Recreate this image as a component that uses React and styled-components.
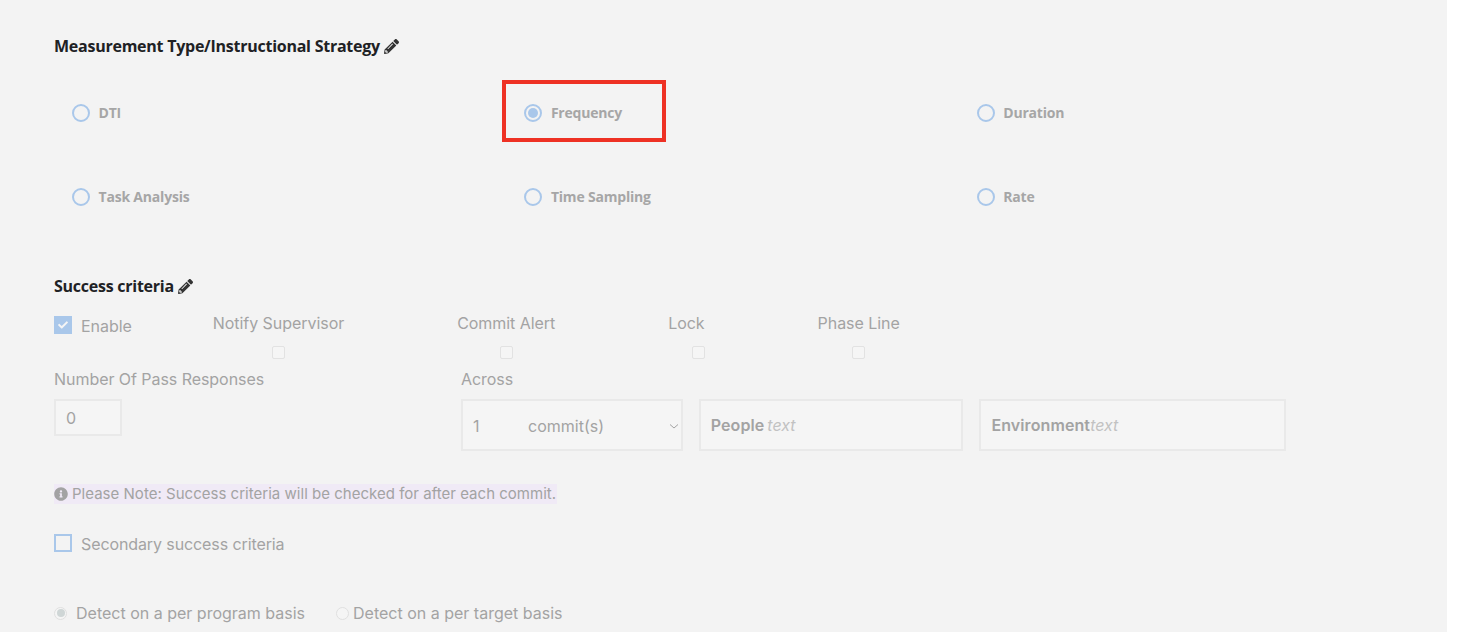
import React from "react";
import styled, { createGlobalStyle } from "styled-components";
import { FaPencilAlt, FaInfoCircle, FaCheck } from "react-icons/fa";

const Global = createGlobalStyle`
  html, body { margin: 0; padding: 0; background: #fff; overflow: hidden; }
  body { font-family: Inter, "Liberation Sans", sans-serif; }
`;

const Panel = styled.main`
  position: relative;
  width: 1447px;
  height: 632px;
  box-sizing: border-box;
  padding: 36px 0 0 54px;
  background: #f3f3f3;
  overflow: hidden;
`;

const Heading = styled.h2`
  display: flex;
  align-items: center;
  gap: 4px;
  height: 20px;
  margin: 0;
  font: 700 16px/20px "Open Sans", sans-serif;
  letter-spacing: -0.25px;
  color: #202124;
  svg { width: 15px; height: 15px; color: #333; }
`;

const RadioGrid = styled.div`
  display: grid;
  grid-template-columns: repeat(3, 452.4px);
  grid-auto-rows: 84px;
  margin: 15px 0 37px;
  padding-left: 18px;
`;

const RadioOption = styled.label`
  display: flex;
  align-items: center;
  gap: 8.5px;
  font: 700 14px/20px "Open Sans", sans-serif;
  letter-spacing: -0.2px;
  color: #a6a6a6;
`;

const RadioDot = styled.span`
  position: relative;
  box-sizing: border-box;
  width: 18px;
  height: 18px;
  border: 2px solid #a9c7ea;
  border-radius: 50%;
  &::after {
    content: "";
    display: ${(p) => (p.$on ? "block" : "none")};
    position: absolute;
    inset: 2px;
    border-radius: 50%;
    background: #a9c7ea;
  }
`;

const Highlight = styled.div`
  position: absolute;
  left: 502px;
  top: 80px;
  width: 164px;
  height: 62px;
  box-sizing: border-box;
  border: 4px solid #ee3124;
`;

const ToggleRow = styled.div`
  display: flex;
  align-items: flex-start;
  margin-top: 17px;
  height: 56px;
`;

const CheckLabel = styled.label`
  display: flex;
  align-items: center;
  gap: 9px;
  margin-right: 81px;
  height: 20px;
  padding-top: 3px;
  font-size: 16px;
  letter-spacing: -0.05px;
  color: #a3a3a3;
`;

const CheckedBox = styled.span`
  display: flex;
  align-items: center;
  justify-content: center;
  width: 18px;
  height: 18px;
  margin-top: -2px;
  background: #a9c7ea;
  color: #f5f5f5;
  svg { width: 10px; height: 10px; }
`;

const ToggleColumn = styled.label`
  display: flex;
  flex-direction: column;
  align-items: center;
  gap: 13px;
  margin-right: 113px;
  font-size: 16px;
  line-height: 20px;
  letter-spacing: -0.05px;
  color: #a3a3a3;
`;

const SmallBox = styled.span`
  box-sizing: border-box;
  width: 13px;
  height: 13px;
  align-self: ${(p) => (p.$end ? "flex-end" : "center")};
  border: 1px solid #e2e2e2;
  border-radius: 2px;
  background: #f5f5f5;
`;

const FieldRow = styled.div`
  display: flex;
  align-items: flex-start;
`;

const FieldGroup = styled.div`
  display: flex;
  flex-direction: column;
  gap: 10px;
  width: ${(p) => p.$width}px;
`;

const FieldLabel = styled.span`
  font-size: 16px;
  line-height: 20px;
  letter-spacing: -0.05px;
  color: #a3a3a3;
`;

const Controls = styled.div`
  display: flex;
  gap: 16px;
`;

const NumberBox = styled.div`
  box-sizing: border-box;
  width: 68px;
  height: 37px;
  padding-left: 10px;
  border: 2px solid #e9e9e9;
  background: #f5f5f5;
  font-size: 16px;
  line-height: 35px;
  color: #a3a3a3;
`;

const SelectBox = styled.div`
  display: flex;
  align-items: center;
  box-sizing: border-box;
  width: 222px;
  height: 52px;
  padding: 1px 1px 0 10px;
  border: 2px solid #e9e9e9;
  background: #f5f5f5;
  font-size: 16px;
  color: #a3a3a3;
`;

const SelectCount = styled.span`
  width: 55px;
`;

const SelectUnit = styled.span`
  flex: 1;
`;

const TextBox = styled.div`
  display: flex;
  align-items: center;
  gap: ${(p) => p.$gap}px;
  box-sizing: border-box;
  width: ${(p) => p.$width}px;
  height: 52px;
  padding-left: 10px;
  border: 2px solid #e9e9e9;
  background: #f5f5f5;
  font-size: 16px;
  font-weight: 600;
  letter-spacing: 0.1px;
  color: #a3a3a3;
`;

const Placeholder = styled.em`
  font-size: 16px;
  font-weight: 400;
  letter-spacing: 0;
  color: #c2c2c2;
`;

const Note = styled.p`
  display: flex;
  align-items: center;
  gap: 4px;
  width: max-content;
  height: 20px;
  margin: 33px 0 0;
  padding-right: 1px;
  font-size: 15px;
  line-height: 20px;
  letter-spacing: 0.02px;
  color: #a3a3a3;
  background: #f0eaf6;
  svg { width: 14px; height: 14px; color: #a3a3a3; }
`;

const SecondaryRow = styled.label`
  display: flex;
  align-items: center;
  gap: 9px;
  margin-top: 30px;
  height: 20px;
  font-size: 16px;
  letter-spacing: -0.1px;
  color: #a3a3a3;
`;

const EmptyBox = styled.span`
  box-sizing: border-box;
  width: 18px;
  height: 18px;
  margin-top: -3px;
  border: 2px solid #a9c7ea;
`;

const BasisRow = styled.div`
  display: flex;
  align-items: center;
  margin-top: 49px;
  height: 20px;
  font-size: 16px;
  color: #a3a3a3;
`;

const BasisOption = styled.label`
  display: flex;
  align-items: center;
  gap: ${(p) => p.$gap}px;
  margin-right: ${(p) => p.$after}px;
`;

const BasisDot = styled.span`
  position: relative;
  box-sizing: border-box;
  width: 13px;
  height: 13px;
  border: 1px solid #e0e0e0;
  border-radius: 50%;
  background: #f5f5f5;
  &::after {
    content: "";
    display: ${(p) => (p.$on ? "block" : "none")};
    position: absolute;
    inset: 1.5px;
    border-radius: 50%;
    background: #cfd6d6;
  }
`;

const radios = [
  ["DTI", false],
  ["Frequency", true],
  ["Duration", false],
  ["Task Analysis", false],
  ["Time Sampling", false],
  ["Rate", false],
];

const toggles = [
  ["Notify Supervisor", false],
  ["Commit Alert", false],
  ["Lock", true],
  ["Phase Line", false],
];

export default function App() {
  return (
    <>
      <Global />
      <Panel>
        <Heading>
          Measurement Type/Instructional Strategy <FaPencilAlt />
        </Heading>
        <RadioGrid>
          {radios.map(([label, on]) => (
            <RadioOption key={label}>
              <RadioDot $on={on} />
              {label}
            </RadioOption>
          ))}
        </RadioGrid>
        <Heading>
          Success criteria <FaPencilAlt />
        </Heading>
        <ToggleRow>
          <CheckLabel>
            <CheckedBox>
              <FaCheck />
            </CheckedBox>
            Enable
          </CheckLabel>
          {toggles.map(([label, end]) => (
            <ToggleColumn key={label}>
              {label}
              <SmallBox $end={end} />
            </ToggleColumn>
          ))}
        </ToggleRow>
        <FieldRow>
          <FieldGroup $width={407}>
            <FieldLabel>Number Of Pass Responses</FieldLabel>
            <NumberBox>0</NumberBox>
          </FieldGroup>
          <FieldGroup $width={825}>
            <FieldLabel>Across</FieldLabel>
            <Controls>
              <SelectBox>
                <SelectCount>1</SelectCount>
                <SelectUnit>commit(s)</SelectUnit>
                <svg width="12" height="12" viewBox="0 0 12 12" fill="none" stroke="#a3a3a3" strokeWidth="1">
                  <path d="M2 4.5 6 8l4-3.5" />
                </svg>
              </SelectBox>
              <TextBox $width={265} $gap={3}>
                People <Placeholder>text</Placeholder>
              </TextBox>
              <TextBox $width={307} $gap={0}>
                Environment<Placeholder>text</Placeholder>
              </TextBox>
            </Controls>
          </FieldGroup>
        </FieldRow>
        <Note>
          <FaInfoCircle />
          Please Note: Success criteria will be checked for after each commit.
        </Note>
        <SecondaryRow>
          <EmptyBox />
          Secondary success criteria
        </SecondaryRow>
        <BasisRow>
          <BasisOption $gap={9} $after={31}>
            <BasisDot $on />
            Detect on a per program basis
          </BasisOption>
          <BasisOption $gap={4} $after={0}>
            <BasisDot />
            Detect on a per target basis
          </BasisOption>
        </BasisRow>
        <Highlight />
      </Panel>
    </>
  );
}
